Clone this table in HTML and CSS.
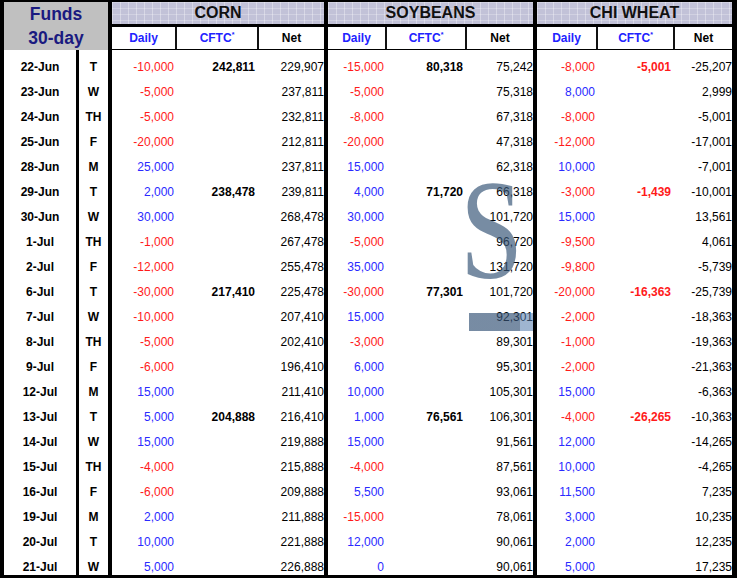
FILE: index.html
```html
<!DOCTYPE html>
<html lang="en">
<head>
<meta charset="utf-8">
<title>Funds 30-day</title>
<link rel="stylesheet" href="styles.css">
</head>
<body>
<div class="sheet">
  <div class="funds">Funds<br>30-day</div>
  <div class="comm sep">CORN</div>
  <div class="comm sep">SOYBEANS</div>
  <div class="comm">CHI WHEAT</div>

  <div class="sub thin">Daily</div><div class="sub thin">CFTC<sup>*</sup></div><div class="sub net sep">Net</div>
  <div class="sub thin">Daily</div><div class="sub thin">CFTC<sup>*</sup></div><div class="sub net sep">Net</div>
  <div class="sub thin">Daily</div><div class="sub thin">CFTC<sup>*</sup></div><div class="sub net">Net</div>

  <div class="c dt">22-Jun</div><div class="c dy">T</div>
  <div class="c dl r">-10,000</div><div class="c cf">242,811</div><div class="c nt sep">229,907</div>
  <div class="c dl r">-15,000</div><div class="c cf">80,318</div><div class="c nt sep">75,242</div>
  <div class="c dl r">-8,000</div><div class="c cf r">-5,001</div><div class="c nt">-25,207</div>

  <div class="c dt">23-Jun</div><div class="c dy">W</div>
  <div class="c dl r">-5,000</div><div class="c cf"></div><div class="c nt sep">237,811</div>
  <div class="c dl r">-5,000</div><div class="c cf"></div><div class="c nt sep">75,318</div>
  <div class="c dl b">8,000</div><div class="c cf"></div><div class="c nt">2,999</div>

  <div class="c dt">24-Jun</div><div class="c dy">TH</div>
  <div class="c dl r">-5,000</div><div class="c cf"></div><div class="c nt sep">232,811</div>
  <div class="c dl r">-8,000</div><div class="c cf"></div><div class="c nt sep">67,318</div>
  <div class="c dl r">-8,000</div><div class="c cf"></div><div class="c nt">-5,001</div>

  <div class="c dt">25-Jun</div><div class="c dy">F</div>
  <div class="c dl r">-20,000</div><div class="c cf"></div><div class="c nt sep">212,811</div>
  <div class="c dl r">-20,000</div><div class="c cf"></div><div class="c nt sep">47,318</div>
  <div class="c dl r">-12,000</div><div class="c cf"></div><div class="c nt">-17,001</div>

  <div class="c dt">28-Jun</div><div class="c dy">M</div>
  <div class="c dl b">25,000</div><div class="c cf"></div><div class="c nt sep">237,811</div>
  <div class="c dl b">15,000</div><div class="c cf"></div><div class="c nt sep">62,318</div>
  <div class="c dl b">10,000</div><div class="c cf"></div><div class="c nt">-7,001</div>

  <div class="c dt">29-Jun</div><div class="c dy">T</div>
  <div class="c dl b">2,000</div><div class="c cf">238,478</div><div class="c nt sep">239,811</div>
  <div class="c dl b">4,000</div><div class="c cf">71,720</div><div class="c nt sep">66,318</div>
  <div class="c dl r">-3,000</div><div class="c cf r">-1,439</div><div class="c nt">-10,001</div>

  <div class="c dt">30-Jun</div><div class="c dy">W</div>
  <div class="c dl b">30,000</div><div class="c cf"></div><div class="c nt sep">268,478</div>
  <div class="c dl b">30,000</div><div class="c cf"></div><div class="c nt sep">101,720</div>
  <div class="c dl b">15,000</div><div class="c cf"></div><div class="c nt">13,561</div>

  <div class="c dt">1-Jul</div><div class="c dy">TH</div>
  <div class="c dl r">-1,000</div><div class="c cf"></div><div class="c nt sep">267,478</div>
  <div class="c dl r">-5,000</div><div class="c cf"></div><div class="c nt sep">96,720</div>
  <div class="c dl r">-9,500</div><div class="c cf"></div><div class="c nt">4,061</div>

  <div class="c dt">2-Jul</div><div class="c dy">F</div>
  <div class="c dl r">-12,000</div><div class="c cf"></div><div class="c nt sep">255,478</div>
  <div class="c dl b">35,000</div><div class="c cf"></div><div class="c nt sep">131,720</div>
  <div class="c dl r">-9,800</div><div class="c cf"></div><div class="c nt">-5,739</div>

  <div class="c dt">6-Jul</div><div class="c dy">T</div>
  <div class="c dl r">-30,000</div><div class="c cf">217,410</div><div class="c nt sep">225,478</div>
  <div class="c dl r">-30,000</div><div class="c cf">77,301</div><div class="c nt sep">101,720</div>
  <div class="c dl r">-20,000</div><div class="c cf r">-16,363</div><div class="c nt">-25,739</div>

  <div class="c dt">7-Jul</div><div class="c dy">W</div>
  <div class="c dl r">-10,000</div><div class="c cf"></div><div class="c nt sep">207,410</div>
  <div class="c dl b">15,000</div><div class="c cf"></div><div class="c nt sep">92,301</div>
  <div class="c dl r">-2,000</div><div class="c cf"></div><div class="c nt">-18,363</div>

  <div class="c dt">8-Jul</div><div class="c dy">TH</div>
  <div class="c dl r">-5,000</div><div class="c cf"></div><div class="c nt sep">202,410</div>
  <div class="c dl r">-3,000</div><div class="c cf"></div><div class="c nt sep">89,301</div>
  <div class="c dl r">-1,000</div><div class="c cf"></div><div class="c nt">-19,363</div>

  <div class="c dt">9-Jul</div><div class="c dy">F</div>
  <div class="c dl r">-6,000</div><div class="c cf"></div><div class="c nt sep">196,410</div>
  <div class="c dl b">6,000</div><div class="c cf"></div><div class="c nt sep">95,301</div>
  <div class="c dl r">-2,000</div><div class="c cf"></div><div class="c nt">-21,363</div>

  <div class="c dt">12-Jul</div><div class="c dy">M</div>
  <div class="c dl b">15,000</div><div class="c cf"></div><div class="c nt sep">211,410</div>
  <div class="c dl b">10,000</div><div class="c cf"></div><div class="c nt sep">105,301</div>
  <div class="c dl b">15,000</div><div class="c cf"></div><div class="c nt">-6,363</div>

  <div class="c dt">13-Jul</div><div class="c dy">T</div>
  <div class="c dl b">5,000</div><div class="c cf">204,888</div><div class="c nt sep">216,410</div>
  <div class="c dl b">1,000</div><div class="c cf">76,561</div><div class="c nt sep">106,301</div>
  <div class="c dl r">-4,000</div><div class="c cf r">-26,265</div><div class="c nt">-10,363</div>

  <div class="c dt">14-Jul</div><div class="c dy">W</div>
  <div class="c dl b">15,000</div><div class="c cf"></div><div class="c nt sep">219,888</div>
  <div class="c dl b">15,000</div><div class="c cf"></div><div class="c nt sep">91,561</div>
  <div class="c dl b">12,000</div><div class="c cf"></div><div class="c nt">-14,265</div>

  <div class="c dt">15-Jul</div><div class="c dy">TH</div>
  <div class="c dl r">-4,000</div><div class="c cf"></div><div class="c nt sep">215,888</div>
  <div class="c dl r">-4,000</div><div class="c cf"></div><div class="c nt sep">87,561</div>
  <div class="c dl b">10,000</div><div class="c cf"></div><div class="c nt">-4,265</div>

  <div class="c dt">16-Jul</div><div class="c dy">F</div>
  <div class="c dl r">-6,000</div><div class="c cf"></div><div class="c nt sep">209,888</div>
  <div class="c dl b">5,500</div><div class="c cf"></div><div class="c nt sep">93,061</div>
  <div class="c dl b">11,500</div><div class="c cf"></div><div class="c nt">7,235</div>

  <div class="c dt">19-Jul</div><div class="c dy">M</div>
  <div class="c dl b">2,000</div><div class="c cf"></div><div class="c nt sep">211,888</div>
  <div class="c dl r">-15,000</div><div class="c cf"></div><div class="c nt sep">78,061</div>
  <div class="c dl b">3,000</div><div class="c cf"></div><div class="c nt">10,235</div>

  <div class="c dt">20-Jul</div><div class="c dy">T</div>
  <div class="c dl b">10,000</div><div class="c cf"></div><div class="c nt sep">221,888</div>
  <div class="c dl b">12,000</div><div class="c cf"></div><div class="c nt sep">90,061</div>
  <div class="c dl b">2,000</div><div class="c cf"></div><div class="c nt">12,235</div>

  <div class="c dt">21-Jul</div><div class="c dy">W</div>
  <div class="c dl b">5,000</div><div class="c cf"></div><div class="c nt sep">226,888</div>
  <div class="c dl b">0</div><div class="c cf"></div><div class="c nt sep">90,061</div>
  <div class="c dl b">5,000</div><div class="c cf"></div><div class="c nt">17,235</div>

  <div class="wm" aria-hidden="true">S</div>
  <div class="wm-bar" aria-hidden="true"></div>
</div>
</body>
</html>
```
FILE: styles.css
```css
html, body {
  margin: 0;
  padding: 0;
  background: #ffffff;
}

body {
  font-family: "Liberation Sans", Arial, sans-serif;
  color: #000;
}

.sheet {
  position: relative;
  box-sizing: border-box;
  width: 737px;
  display: grid;
  grid-template-columns: 75px 33px 65px 82px 69px 59px 80px 70px 61px 77px 57px;
  grid-template-rows: 25px 23px repeat(21, 25px);
  border-style: solid;
  border-color: #000;
  border-width: 2px 5px 3px 4px;
}

.funds {
  grid-column: 1 / 3;
  grid-row: 1 / 3;
  background: #c0c0c0;
  border-right: 4px solid #000;
  color: #1a1a80;
  font-weight: bold;
  font-size: 17.5px;
  line-height: 24px;
  text-align: center;
}

.comm {
  grid-column: span 3;
  background-color: #c2c2d8;
  background-image:
    repeating-linear-gradient(to right, rgba(255,255,255,0.35) 0 1px, transparent 1px 8px),
    repeating-linear-gradient(to bottom, rgba(255,255,255,0.25) 0 1px, transparent 1px 6px);
  border-bottom: 3px solid #000;
  font-weight: bold;
  font-size: 16px;
  line-height: 22px;
  text-align: center;
  color: #111;
}

.sub {
  border-bottom: 1px solid #000;
  font-weight: bold;
  font-size: 12px;
  line-height: 23px;
  text-align: center;
  color: #2222ff;
}

.sub sup {
  font-size: 7px;
  vertical-align: 5px;
  line-height: 0;
}

.sub.thin {
  border-right: 2px solid #111;
}

.sub.net {
  color: #000;
}

.c {
  font-size: 12px;
  line-height: 14px;
  padding-top: 10px;
  white-space: nowrap;
}

.dt {
  text-align: center;
  font-weight: bold;
  border-right: 3px solid #000;
}

.dy {
  text-align: center;
  font-weight: bold;
  border-right: 4px solid #000;
}

.dl {
  text-align: right;
  padding-right: 3px;
}

.cf {
  text-align: right;
  padding-right: 4px;
  font-weight: bold;
}

.nt {
  text-align: right;
  padding-right: 0;
}

.sep {
  border-right: 4px solid #000;
}

.r {
  color: #ff1a1a;
}

.b {
  color: #2a2aff;
}

.wm {
  position: absolute;
  left: 456px;
  top: 157px;
  font-family: "Liberation Serif", "Times New Roman", serif;
  font-size: 142px;
  line-height: 1;
  color: rgba(55, 85, 120, 0.68);
  transform: scaleX(0.8);
  transform-origin: left top;
  pointer-events: none;
}

.wm-bar {
  position: absolute;
  left: 465px;
  top: 311px;
  width: 64px;
  height: 18px;
  background: linear-gradient(to right, rgba(55, 85, 120, 0.68) 0 51px, rgba(80, 120, 170, 0.55) 51px);
  pointer-events: none;
}
```
